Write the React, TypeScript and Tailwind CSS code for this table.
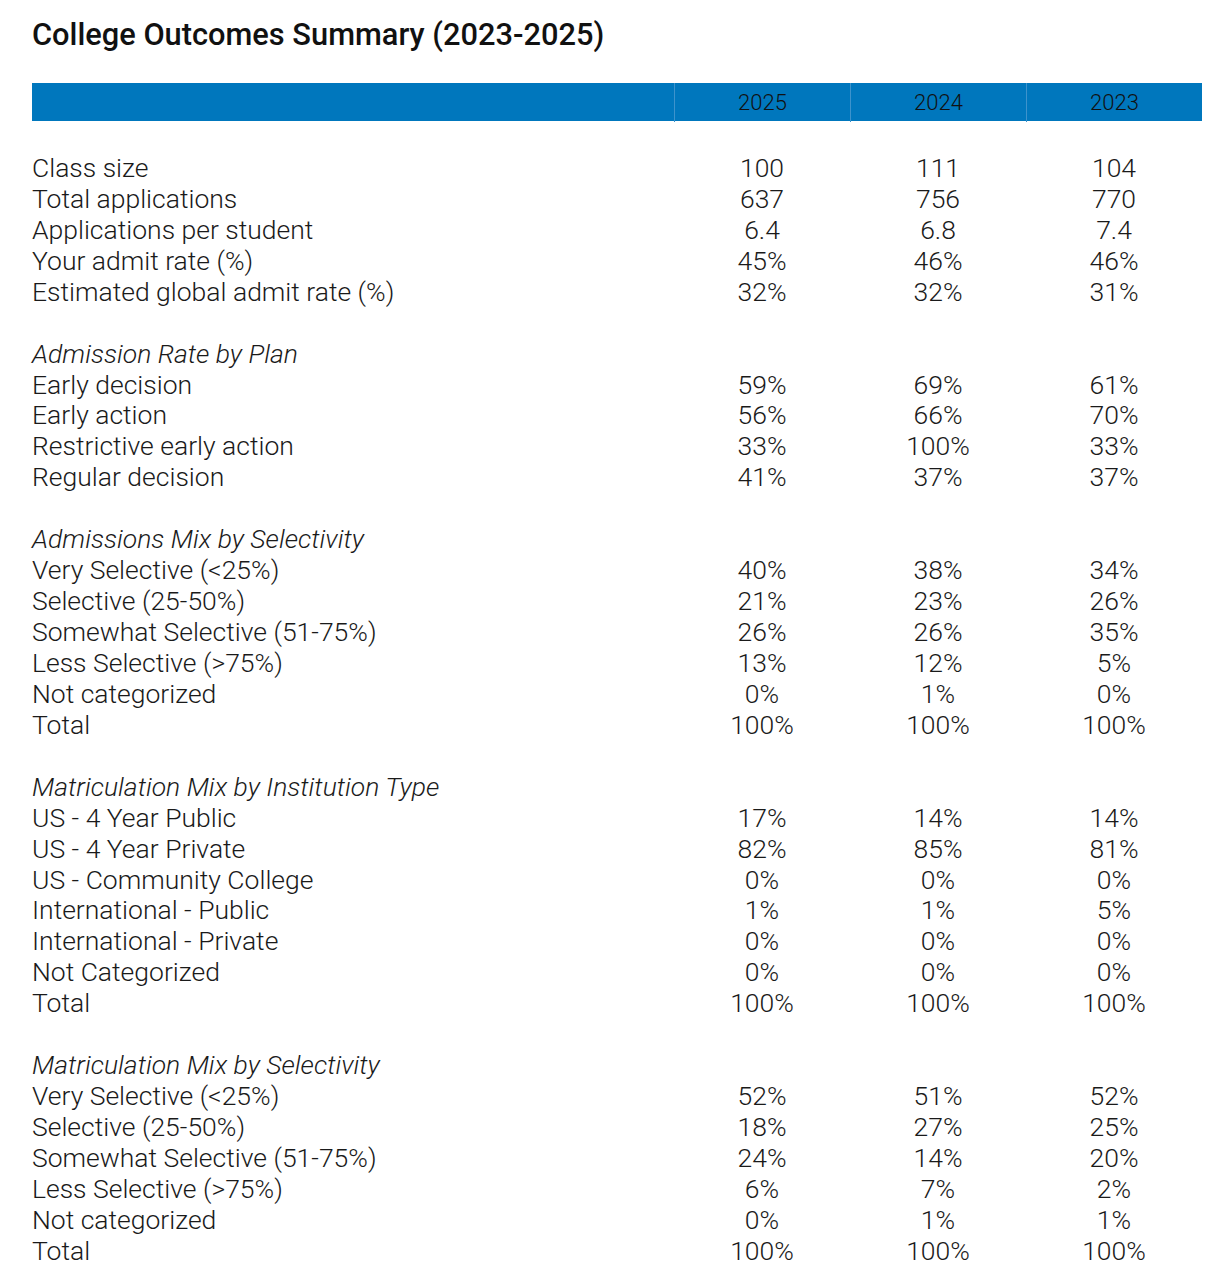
import React from "react";

type Row = { label: string; vals?: [string, string, string]; italic?: boolean; blank?: boolean };

const rows: Row[] = [
  { label: "", blank: true },
  { label: "Class size", vals: ["100", "111", "104"] },
  { label: "Total applications", vals: ["637", "756", "770"] },
  { label: "Applications per student", vals: ["6.4", "6.8", "7.4"] },
  { label: "Your admit rate (%)", vals: ["45%", "46%", "46%"] },
  { label: "Estimated global admit rate (%)", vals: ["32%", "32%", "31%"] },
  { label: "", blank: true },
  { label: "Admission Rate by Plan", italic: true },
  { label: "Early decision", vals: ["59%", "69%", "61%"] },
  { label: "Early action", vals: ["56%", "66%", "70%"] },
  { label: "Restrictive early action", vals: ["33%", "100%", "33%"] },
  { label: "Regular decision", vals: ["41%", "37%", "37%"] },
  { label: "", blank: true },
  { label: "Admissions Mix by Selectivity", italic: true },
  { label: "Very Selective (<25%)", vals: ["40%", "38%", "34%"] },
  { label: "Selective (25-50%)", vals: ["21%", "23%", "26%"] },
  { label: "Somewhat Selective (51-75%)", vals: ["26%", "26%", "35%"] },
  { label: "Less Selective (>75%)", vals: ["13%", "12%", "5%"] },
  { label: "Not categorized", vals: ["0%", "1%", "0%"] },
  { label: "Total", vals: ["100%", "100%", "100%"] },
  { label: "", blank: true },
  { label: "Matriculation Mix by Institution Type", italic: true },
  { label: "US - 4 Year Public", vals: ["17%", "14%", "14%"] },
  { label: "US - 4 Year Private", vals: ["82%", "85%", "81%"] },
  { label: "US - Community College", vals: ["0%", "0%", "0%"] },
  { label: "International - Public", vals: ["1%", "1%", "5%"] },
  { label: "International - Private", vals: ["0%", "0%", "0%"] },
  { label: "Not Categorized", vals: ["0%", "0%", "0%"] },
  { label: "Total", vals: ["100%", "100%", "100%"] },
  { label: "", blank: true },
  { label: "Matriculation Mix by Selectivity", italic: true },
  { label: "Very Selective (<25%)", vals: ["52%", "51%", "52%"] },
  { label: "Selective (25-50%)", vals: ["18%", "27%", "25%"] },
  { label: "Somewhat Selective (51-75%)", vals: ["24%", "14%", "20%"] },
  { label: "Less Selective (>75%)", vals: ["6%", "7%", "2%"] },
  { label: "Not categorized", vals: ["0%", "1%", "1%"] },
  { label: "Total", vals: ["100%", "100%", "100%"] },
];

export default function App() {
  return (
    <div className="min-h-[1287px] bg-white pl-[32px] pr-[13px] pt-[16px] text-[#1a1a1a] [font-family:Roboto,'Noto_Sans',sans-serif]">
      <h1 className="text-[30.8px] font-medium leading-[38px] text-[#111]">
        College Outcomes Summary (2023-2025)
      </h1>
      <div className="mt-[29px] w-[1170px]">
        <div className="grid h-[38px] grid-cols-[642px_176px_176px_176px] bg-[#0077bd] text-[22px] font-light leading-[39px] text-[#111]">
          <div />
          <div className="border-l border-[#3d93cc] text-center">2025</div>
          <div className="border-l border-[#3d93cc] text-center">2024</div>
          <div className="border-l border-[#3d93cc] text-center">2023</div>
        </div>
        {rows.map((r, i) => (
          <div
            key={i}
            className="grid h-[30.94px] grid-cols-[642px_176px_176px_176px] text-[26.5px] font-light leading-[32px]"
          >
            <div className={r.italic ? "italic" : ""}>{r.label}</div>
            {r.vals ? (
              <>
                <div className="text-center">{r.vals[0]}</div>
                <div className="text-center">{r.vals[1]}</div>
                <div className="text-center">{r.vals[2]}</div>
              </>
            ) : (
              <>
                <div />
                <div />
                <div />
              </>
            )}
          </div>
        ))}
      </div>
    </div>
  );
}
